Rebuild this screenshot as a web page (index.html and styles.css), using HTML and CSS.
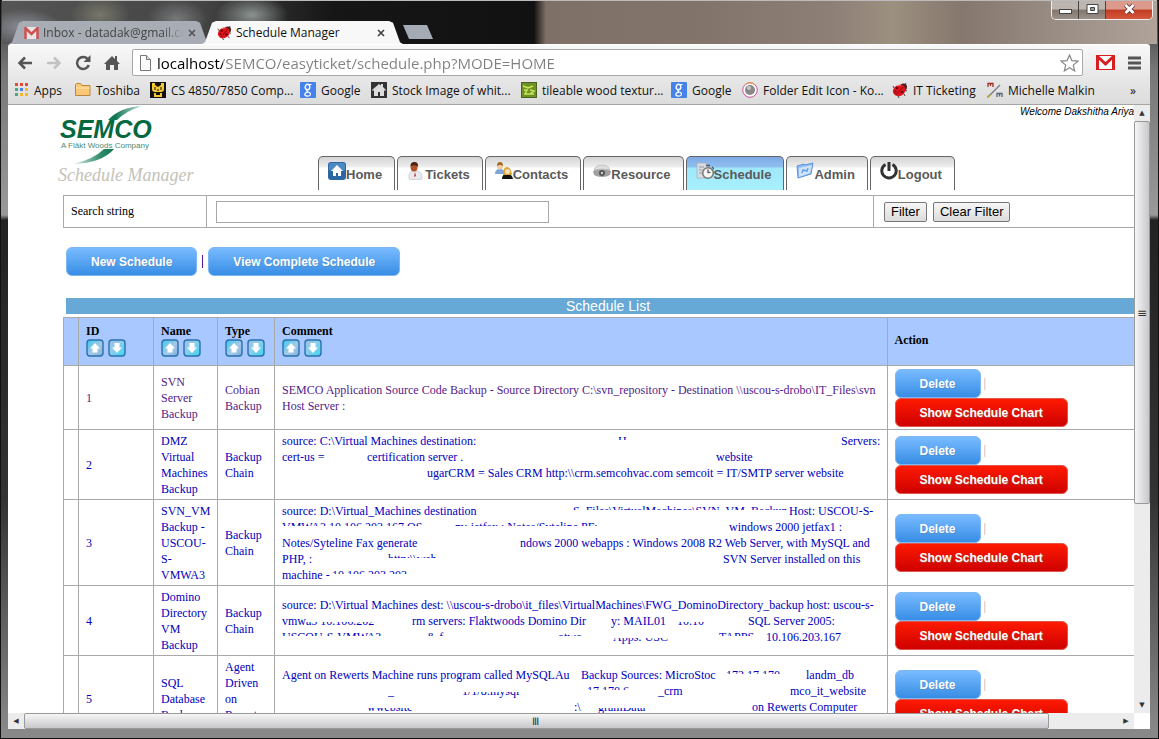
FILE: index.html
```html
<!DOCTYPE html>
<html lang="en">
<head>
    <meta charset="UTF-8">
    <meta name="viewport" content="width=device-width, initial-scale=1.0">
    <title>Schedule Manager</title>
    <link rel="stylesheet" href="styles.css">
</head>
<body>

    <!-- Shared icons -->
    <svg class="defs" width="0" height="0">
        <defs>
            <linearGradient id="cyan" x1="0" y1="0" x2="1" y2="1">
                <stop offset="0" stop-color="#38c8f0"/><stop offset=".55" stop-color="#a5c8e4"/><stop offset="1" stop-color="#7fb2dc"/>
            </linearGradient>
            <linearGradient id="cyan2" x1="1" y1="1" x2="0" y2="0">
                <stop offset="0" stop-color="#38d8f0"/><stop offset=".55" stop-color="#8ccdec"/><stop offset="1" stop-color="#9fc0e0"/>
            </linearGradient>
            <linearGradient id="swoosh" x1="0" y1="0" x2="1" y2="0">
                <stop offset="0" stop-color="#e6f2ec"/><stop offset=".4" stop-color="#2f8c69"/><stop offset=".6" stop-color="#0b7550"/><stop offset="1" stop-color="#c5e0d4"/>
            </linearGradient>
        </defs>
        <symbol id="up" viewBox="0 0 18 18">
            <rect x="1" y="1" width="16" height="16" rx="3" fill="url(#cyan)" stroke="#2a70b0" stroke-width="1.4"/>
            <path d="M9 4 14 9.500H11.500V13.500H6.500V9.500H4z" fill="#fff"/>
        </symbol>
        <symbol id="down" viewBox="0 0 18 18">
            <rect x="1" y="1" width="16" height="16" rx="3" fill="url(#cyan2)" stroke="#2a70b0" stroke-width="1.4"/>
            <path d="M9 14 14 8.500H11.500V4H6.500V8.500H4z" fill="#fff"/>
        </symbol>
        <symbol id="bug" viewBox="0 0 16 16">
            <path d="M2 6 1 4M12 4l2-3M13 8l2 1M12 12l1 2M6 14l1 2" stroke="#444"/>
            <circle cx="11.500" cy="5" r="3.500" fill="#4b2220"/>
            <ellipse cx="7" cy="8.500" rx="6.500" ry="5.500" transform="rotate(-30 7 8)" fill="#e0141c"/>
            <path d="M4 13 11 5" stroke="#8c0a10"/>
            <circle cx="5" cy="6" r="1.300" fill="#6a0508"/><circle cx="10" cy="10" r="1.300" fill="#6a0508"/><circle cx="3.500" cy="9.500" r="1" fill="#6a0508"/>
            <path d="M5 4q2-1.500 4-1" stroke="#ff9c98" fill="none"/>
        </symbol>
        <symbol id="google" viewBox="0 0 16 16">
            <rect width="16" height="16" rx="1" fill="#4583ea"/>
            <ellipse cx="7.500" cy="5" rx="2.300" ry="2.700" fill="none" stroke="#fff" stroke-width="1.400"/>
            <path d="M9 2.500h2.500M8 7.500q-3 1 0 2.200 3 1 2.400 3-1 1.700-3.200 1.500-2.600-.4-2.400-2.200.5-1.500 3.200-1.800" fill="none" stroke="#fff" stroke-width="1.200"/>
        </symbol>
    </svg>

    <!-- Title bar -->
    <header class="titlebar">
        <div class="tabs">
            <div class="tab">
                <svg width="15" height="12" viewBox="0 0 15 12"><rect x="1" width="13" height="12" fill="#e8e4e4"/><path d="M1.500 12V1L7.500 7l6-6v11" fill="none" stroke="#cf5150" stroke-width="2.500"/></svg>
                <span class="tab-title faded">Inbox - datadak@gmail.cc</span>
                <button class="close" aria-label="Close tab"><svg width="8" height="8"><path d="M1 1l6 6M7 1 1 7" stroke="#555" stroke-width="1.700"/></svg></button>
            </div>
            <div class="tab active">
                <svg width="15" height="15"><use href="#bug"/></svg>
                <span class="tab-title">Schedule Manager</span>
                <button class="close" aria-label="Close tab"><svg width="8" height="8"><path d="M1 1l6 6M7 1 1 7" stroke="#444" stroke-width="1.700"/></svg></button>
            </div>
            <button class="new-tab" aria-label="New tab"></button>
        </div>
        <div class="window-buttons">
            <button aria-label="Minimize"><svg width="13" height="12"><rect x=".5" y="6.500" width="12" height="4" fill="#fff" stroke="#444"/></svg></button>
            <button aria-label="Maximize"><svg width="13" height="12"><path d="M1 1.500h11v9H1z" fill="#fff" stroke="#444"/><path d="M4.500 4.500h4v3h-4z" fill="#999" stroke="#444"/></svg></button>
            <button class="quit" aria-label="Close"><svg width="13" height="12"><path d="M2.500 2 10.500 10M10.500 2 2.500 10" stroke="#5c3030" stroke-width="4.500"/><path d="M2.500 2 10.500 10M10.500 2 2.500 10" stroke="#fff" stroke-width="2.800"/></svg></button>
        </div>
    </header>

    <!-- Address bar -->
    <div class="toolbar">
        <button aria-label="Back"><svg width="16" height="14"><path d="M15 7H3M8 1.500 2.500 7 8 12.500" fill="none" stroke="#555" stroke-width="2.500"/></svg></button>
        <button aria-label="Forward"><svg width="16" height="14"><path d="M1 7h12M8 1.500 13.500 7 8 12.500" fill="none" stroke="#c2c2c2" stroke-width="2.500"/></svg></button>
        <button aria-label="Reload"><svg width="16" height="16"><path d="M13 4.500A6 6 0 1 0 13.800 10" fill="none" stroke="#555" stroke-width="2.500"/><path d="M15.500 0v7H8.500z" fill="#555"/></svg></button>
        <button aria-label="Home"><svg width="16" height="16"><path d="M8 1 0 9h2v6h4v-5h4v5h4V9h2l-3-3V1h-2v3z" fill="#555"/></svg></button>
        <div class="omnibox">
            <svg width="13" height="16"><path d="M1.500.5h6l4 4v11h-10z" fill="#fafafa" stroke="#777"/><path d="M7.500.5v4h4" fill="#ddd" stroke="#777"/></svg>
            <input type="text" aria-label="Address" value="localhost/SEMCO/easyticket/schedule.php?MODE=HOME">
            <svg width="19" height="18" viewBox="0 0 19 18"><path d="M9.500 1l2.400 5.600 6 .5-4.600 4 1.400 5.900-5.200-3.200L4.300 17l1.400-5.900-4.600-4 6-.5z" fill="#fff" stroke="#888" stroke-width="1.200"/></svg>
        </div>
        <button aria-label="Gmail"><svg width="19" height="15"><rect width="19" height="15" fill="#fff"/><path d="M1.500 15V1.500L9.500 9l8-7.500V15" fill="none" stroke="#d61f22" stroke-width="3"/><path d="M0 .5h19M0 14.500h19" stroke="#d61f22"/></svg></button>
        <button aria-label="Menu"><svg width="13" height="14"><path d="M0 2h13M0 7h13M0 12h13" stroke="#555" stroke-width="3"/></svg></button>
    </div>

    <!-- Bookmarks -->
    <nav class="bookmarks">
        <a href="#"><svg width="14" height="14"><g fill="#dd4b39"><path d="M0 0h3v3H0zM5 0h3v3H5zM10 0h3v3h-3z"/></g><path d="M0 5h3v3H0z" fill="#4a8"/><path d="M5 5h3v3H5z" fill="#4583ea"/><path d="M10 5h3v3h-3zM5 10h3v3H5zM10 10h3v3h-3z" fill="#f2b630"/><path d="M0 10h3v3H0z" fill="#4a8"/></svg>Apps</a>
        <a href="#"><svg width="16" height="14"><path d="M.5 12.500v-11l1-1h4l1.500 2h8v10z" fill="#f9c877" stroke="#b8863c"/><path d="M1 5h14" stroke="#ffe6b5"/></svg>Toshiba</a>
        <a href="#"><svg width="16" height="16"><rect width="16" height="16" fill="#111"/><path d="M2 1v6q0 3 3 3h6q3 0 3-3V1h-3v2L8 5 5 3V1zM4 11v4h8v-4h-2v2H6v-2z" fill="#f5c836"/><path d="M5 5v3M11 5v3M8 7v2" stroke="#111"/></svg>CS 4850/7850 Comp...</a>
        <a href="#"><svg width="16" height="16"><use href="#google"/></svg>Google</a>
        <a href="#"><svg width="16" height="16"><rect width="16" height="16" fill="#333"/><path d="M8 2 1 8l1 1 1-1v6h4v-4h2v4h4V8l1 1 1-1-3-3V2h-2v1.500z" fill="#ddd"/></svg>Stock Image of whit...</a>
        <a href="#"><svg width="16" height="16"><rect x=".5" y=".5" width="15" height="15" fill="#6f8f28" stroke="#4a6420"/><path d="M2 4l5 2 5-2M3 8h3l-2 4h4M9 8l4 1-4 3h4" stroke="#c8e858" fill="none" stroke-width="1.500"/></svg>tileable wood textur...</a>
        <a href="#"><svg width="16" height="16"><use href="#google"/></svg>Google</a>
        <a href="#"><svg width="16" height="16"><circle cx="8" cy="8" r="7.300" fill="#fff" stroke="#c7519b"/><path d="M3 3a7 7 0 0 1 10 0" fill="none" stroke="#e0a030"/><circle cx="8" cy="8" r="5" fill="#888"/><circle cx="7" cy="6" r="2" fill="#c8c8c8"/></svg>Folder Edit Icon - Ko...</a>
        <a href="#"><svg width="16" height="16"><use href="#bug"/></svg>IT Ticketing</a>
        <a href="#"><svg width="16" height="16"><path d="M1 5V1.500h5V5M3.500 1.500V4" fill="none" stroke="#9b2f25" stroke-width="1.300"/><path d="M2 14 13 3" stroke="#778" stroke-width="1.300"/><path d="M0 15.500 3 13" stroke="#b8a820" stroke-width="2"/><path d="M10 15v-3.500h5V15M12.500 12v2.500" fill="none" stroke="#56657a" stroke-width="1.300"/></svg>Michelle Malkin</a>
        <a class="more" href="#">»</a>
    </nav>

    <!-- Page area with its scrollbars -->
    <div class="view">
        <main class="page">
            <div class="page-head">
                <div class="brand">
                    <svg width="98" height="60" viewBox="0 0 98 60">
                        <path d="M48 15Q60 2 82 1 66 6 57 15zM54 44Q42 58 13 59 34 54 44 44z" fill="url(#swoosh)"/>
                        <text x="0" y="33" class="logo-name">SEMCO</text>
                        <text x="1" y="43" class="logo-sub">A Fläkt Woods Company</text>
                    </svg>
                    <h1>Schedule Manager</h1>
                </div>
                <div class="head-right">
                    <p class="welcome">Welcome Dakshitha Ariya</p>
                    <nav class="menu">
                        <a href="#"><svg width="18" height="18"><rect width="18" height="18" rx="3" fill="#2c67a4"/><rect x="1" y="1" width="16" height="8" rx="2" fill="#4c89c2"/><path d="M9 3 3 9h2v5h3v-3h2v3h3V9h2z" fill="#fff"/></svg>Home</a>
                        <a href="#"><svg width="18" height="18"><path d="M2 17q-1-7 4-8h4q6 1 5 8-6 2-13 0z" fill="#e8eaee" stroke="#b9bcc4" stroke-width=".6"/><path d="M8 10l-1 5 2-1z" fill="#b33"/><ellipse cx="7" cy="5" rx="3.500" ry="4.500" fill="#b0532c"/><path d="M3.500 4q0-4 4-4 4 0 3.500 5-1-3-7.500-1z" fill="#4a2314"/></svg>Tickets</a>
                        <a href="#"><svg width="18" height="18"><path d="M0 12q0-5 5-5t5 5z" fill="#7fa6d8"/><circle cx="5" cy="4.500" r="3" fill="#f2cda0"/><path d="M2 4q0-4 3-4t3 4q-3-2-6 0z" fill="#a06a20"/><path d="M7 17q0-5 5-5t6 5z" fill="#111"/><path d="M8 13q0-8 4-8t5 8z" fill="#dba332"/><circle cx="12.500" cy="9.500" r="2.500" fill="#f8dcb8"/></svg>Contacts</a>
                        <a href="#"><svg width="18" height="18"><path d="M1 8q2-5 8-5t8 5v4q-8 4-16 0z" fill="#b8b8b8"/><path d="M1 8q2-5 8-5t8 5q-8-2-16 0z" fill="#dedede" stroke="#b5b5b5" stroke-width=".6"/><path d="M0 9q9-2 18 0l-1 4q-3 2-8 2t-8-2z" fill="#a0a0a0"/><circle cx="9" cy="11" r="3" fill="#555"/><circle cx="9" cy="11" r="1.200" fill="#ccc"/></svg>Resource</a>
                        <a href="#" class="current"><svg width="18" height="18"><path d="M1 1h8l3 3v12H1z" fill="#d8dbe0" stroke="#a9adb5" stroke-width=".7"/><path d="M3 5h5M3 8h3M3 11h3" stroke="#99a"/><circle cx="12" cy="11" r="5.300" fill="#f4f4f4" stroke="#777" stroke-width="1.500"/><path d="M12 11V7.500M12 11l2.500-1M10 3.500h4M16 5l2 2" stroke="#555" stroke-width="1.300"/></svg>Schedule</a>
                        <a href="#"><svg width="18" height="18"><path d="M1 4 8 2l1 1 8-2-2 11L2 16z" fill="#8fbdf2" stroke="#5c92d8"/><path d="M3 6 16 3l-2 8-11 4z" fill="#cfe3fb"/><path d="M6 11l1-3 4 1 1-3" fill="none" stroke="#6aa0e4" stroke-width="1.500"/></svg>Admin</a>
                        <a href="#"><svg width="18" height="18"><path d="M5.500 2.500a7.200 7.200 0 1 0 7 0M9 0v9" fill="none" stroke="#333" stroke-width="3"/></svg>Logout</a>
                    </nav>
                </div>
            </div>

            <form class="search">
                <div class="search-label"><label for="search">Search string</label></div>
                <div class="search-field"><input type="text" id="search"></div>
                <div class="search-actions"><button type="button">Filter</button><button type="button">Clear Filter</button></div>
            </form>

            <div class="actions">
                <button class="btn">New Schedule</button><span class="bar"></span><button class="btn">View Complete Schedule</button>
            </div>

            <h2>Schedule List</h2>
            <table>
                <colgroup><col class="c-mark"><col class="c-id"><col class="c-name"><col class="c-type"><col><col class="c-action"></colgroup>
                <thead>
                    <tr>
                        <th></th>
                        <th>ID<div class="sort"><svg><use href="#up"/></svg><svg><use href="#down"/></svg></div></th>
                        <th>Name<div class="sort"><svg><use href="#up"/></svg><svg><use href="#down"/></svg></div></th>
                        <th>Type<div class="sort"><svg><use href="#up"/></svg><svg><use href="#down"/></svg></div></th>
                        <th>Comment<div class="sort"><svg><use href="#up"/></svg><svg><use href="#down"/></svg></div></th>
                        <th>Action</th>
                    </tr>
                </thead>
                <tbody>
                    <tr class="visited">
                        <td></td>
                        <td><a href="#">1</a></td>
                        <td><a href="#">SVN<br>Server<br>Backup</a></td>
                        <td><a href="#">Cobian<br>Backup</a></td>
                        <td><a href="#">SEMCO Application Source Code Backup - Source Directory C:\svn_repository - Destination \\uscou-s-drobo\IT_Files\svn<br>Host Server :</a></td>
                        <td><button class="btn">Delete</button><span class="dim">|</span><br><button class="btn red">Show Schedule Chart</button></td>
                    </tr>
                    <tr>
                        <td></td>
                        <td><a href="#">2</a></td>
                        <td><a href="#">DMZ<br>Virtual<br>Machines<br>Backup</a></td>
                        <td><a href="#">Backup<br>Chain</a></td>
                        <td><a href="#">
                            <span class="line"><i class="w336">source: C:\Virtual Machines destination:</i><i class="w223 top">H</i><i>Servers:</i></span>
                            <span class="line"><i class="w85">cert-us =</i><i class="w349">certification server .</i><i>website</i></span>
                            <span class="line"><i class="w145"></i><i>ugarCRM = Sales CRM http:\\crm.semcohvac.com semcoit = IT/SMTP server website</i></span>
                            <span class="line"></span>
                        </a></td>
                        <td><button class="btn">Delete</button><span class="dim">|</span><br><button class="btn red">Show Schedule Chart</button></td>
                    </tr>
                    <tr>
                        <td></td>
                        <td><a href="#">3</a></td>
                        <td><a href="#">SVN_VM<br>Backup -<br>USCOU-<br>S-<br>VMWA3</a></td>
                        <td><a href="#">Backup<br>Chain</a></td>
                        <td><a href="#">
                            <span class="line"><i class="w291">source: D:\Virtual_Machines destination</i><i class="w216 top">S_Files\VirtualMachines\SVN_VM_Backup</i><i>Host: USCOU-S-</i></span>
                            <span class="line"><i class="w173 top">VMWA3 10.106.203.167 OS</i><i class="w274 top">m: jetfax : Notes/Syteline PF:</i><i>windows 2000 jetfax1 :</i></span>
                            <span class="line"><i class="w238">Notes/Syteline Fax generate</i><i>ndows 2000 webapps : Windows 2008 R2 Web Server, with MySQL and</i></span>
                            <span class="line"><i class="w106">PHP, :</i><i class="w335 top">http:\\web</i><i>SVN Server installed on this</i></span>
                            <span class="line"><i class="w50">machine -</i><i class="top">10.106.203.203</i></span>
                        </a></td>
                        <td><button class="btn">Delete</button><span class="dim">|</span><br><button class="btn red">Show Schedule Chart</button></td>
                    </tr>
                    <tr>
                        <td></td>
                        <td><a href="#">4</a></td>
                        <td><a href="#">Domino<br>Directory<br>VM<br>Backup</a></td>
                        <td><a href="#">Backup<br>Chain</a></td>
                        <td><a href="#">
                            <span class="line">source: D:\Virtual Machines dest: \\uscou-s-drobo\it_files\VirtualMachines\FWG_DominoDirectory_backup host: uscou-s-</span>
                            <span class="line"><i class="w24">vmw</i><i class="w106 low">a3 10.106.202</i><i class="w199">rm servers: Flaktwoods Domino Dir</i><i class="w66">y: MAIL01</i><i class="w71 low">10.10</i><i>SQL Server 2005:</i></span>
                            <span class="line"><i class="w145 top">USCOU-S-VMWA3</i><i class="w131 top">&amp; f</i><i class="w55 top">otwo</i><i class="w106 low">Apps: USC</i><i class="w47 top">TAPPS</i><i>10.106.203.167</i></span>
                        </a></td>
                        <td><button class="btn">Delete</button><span class="dim">|</span><br><button class="btn red">Show Schedule Chart</button></td>
                    </tr>
                    <tr>
                        <td></td>
                        <td><a href="#">5</a></td>
                        <td><a href="#">SQL<br>Database<br>Backup</a></td>
                        <td><a href="#">Agent<br>Driven<br>on<br>Remote<br>Machine</a></td>
                        <td><a href="#">
                            <span class="line"><i class="w299">Agent on Rewerts Machine runs program called MySQLAu</i><i class="w145">Backup Sources: MicroStoc</i><i class="w80 top">172.17.170</i><i>landm_db</i></span>
                            <span class="line"><i class="w106"></i><i class="w74 low">_</i><i class="w125 low">1/1/8:mysql</i><i class="w71 top">17.170.6</i><i class="w132">_crm</i><i>mco_it_website</i></span>
                            <span class="line"><i class="w85"></i><i class="w207 low">wwebsite</i><i class="w24">:\</i><i class="w154 low">gramData</i><i>on Rewerts Computer</i></span>
                            <span class="line"></span>
                        </a></td>
                        <td><button class="btn">Delete</button><span class="dim">|</span><br><button class="btn red">Show Schedule Chart</button></td>
                    </tr>
                </tbody>
            </table>
        </main>
        <div class="vscroll"><span class="arrow">▲</span><span class="thumb">≡</span><span class="arrow">▼</span></div>
        <div class="hscroll"><span class="arrow">◀</span><span class="thumb"><b>≡</b></span><span class="arrow">▶</span></div>
    </div>

</body>
</html>
```
FILE: styles.css
```css
* {
    box-sizing: border-box;
}

body {
    margin: 0;
    height: 100vh;
    padding: 0 9px 10px 8px;
    display: flex;
    flex-direction: column;
    overflow: hidden;
    background: linear-gradient(#333 0, #777 70px, #999 215px, #222 220px, #333 500px, #888 730px);
    box-shadow: inset 0 0 0 1px #111;
    font-family: "Liberation Serif", serif;
    font-size: 12px;
}

button {
    padding: 0;
    border: 0;
    background: none;
    font-family: inherit;
}

a {
    text-decoration: none;
}

.defs {
    position: absolute;
}

/* Title bar */
.titlebar {
    flex: none;
    height: 44px;
    margin: 0 -7px 0 -6px;
    padding: 0 4px 0 7px;
    display: flex;
    justify-content: space-between;
    align-items: flex-end;
    border-top: 1px solid #bbb;
    background:
        radial-gradient(ellipse 40px 18px at 20px 26px, #8a8c96, transparent),
        radial-gradient(ellipse 30px 20px at 98px 14px, #77766a, transparent),
        radial-gradient(ellipse 30px 20px at 175px 18px, #77787a, transparent),
        radial-gradient(ellipse 36px 20px at 250px 14px, #8a9290, transparent),
        linear-gradient(90deg, #555 0, #444 200px, #161616 330px, #111 532px, #7e7067 544px, #82746a 700px, #8d7f76 830px, #9c907f 890px, #85776d 960px, #b0a49a 100%);
    font-family: "Open Sans", sans-serif;
}

.tabs {
    display: flex;
    height: 23px;
}

.tab {
    width: 201px;
    margin-right: -8px;
    padding: 0 14px 0 15px;
    display: flex;
    align-items: center;
    gap: 4px;
    background: #a8adb5;
    color: #444;
    clip-path: polygon(0 100%, 3px 92%, 10px 8%, 14px 0, 187px 0, 191px 8%, 198px 92%, 100% 100%);
}

.tab.active {
    position: relative;
    background: #f8f8f8;
    color: #111;
}

.tab:not(.active) {
    padding-right: 10px;
}

.tab-title {
    flex: 1;
    min-width: 0;
    white-space: nowrap;
}

.faded {
    mask-image: linear-gradient(90deg, #000 85%, transparent);
}

.close {
    display: flex;
    margin-right: 4px;
}

.new-tab {
    width: 30px;
    height: 14px;
    margin: 4px 0 0 8px;
    background: #a5abb4;
    clip-path: polygon(0 0, 80% 0, 100% 100%, 20% 100%);
}

.window-buttons {
    align-self: flex-start;
    display: flex;
    border: 1px solid #eee;
    border-top: 0;
    border-radius: 0 0 5px 5px;
    overflow: hidden;
}

.window-buttons button {
    width: 27px;
    height: 18px;
    border-right: 1px solid #444;
    background: linear-gradient(#bdb5b0 45%, #82776f 50%, #9b9189);
}

.window-buttons .quit {
    width: 46px;
    border: 0;
    background: linear-gradient(#dc9a8c 45%, #c23c24 50%, #d4583c);
}

/* Address bar */
.toolbar {
    flex: none;
    height: 32px;
    padding: 4px 9px 0;
    display: flex;
    align-items: center;
    gap: 13px;
    background: linear-gradient(#f8f8f8, #e9e9e9);
    border-top: 1px solid #fff;
    border-radius: 3px 3px 0 0;
}

.toolbar button {
    display: flex;
}

.omnibox {
    flex: 1;
    height: 27px;
    padding: 0 3px 0 6px;
    margin-left: -1px;
    display: flex;
    align-items: center;
    gap: 5px;
    background: #fff;
    border: 1px solid #a8a8a8;
    border-radius: 2px;
}

.omnibox input {
    flex: 1;
    min-width: 0;
    padding: 0;
    border: 0;
    color: transparent;
    background: linear-gradient(90deg, #000 66px, #808080 66px);
    background-clip: text;
    font: 15px/22px "Open Sans", sans-serif;
}

/* Bookmarks */
.bookmarks {
    flex: none;
    height: 29px;
    padding: 0 7px;
    display: grid;
    grid-template-columns: 60px 75px 150px 71px 150px 150px 71px 150px 95px 1fr 13px;
    align-items: center;
    background: linear-gradient(#e8e8e8, #dcdcdc);
    border-bottom: 1px solid #a5a5a5;
    font-family: "Open Sans", sans-serif;
}

.bookmarks a {
    display: flex;
    align-items: center;
    gap: 5px;
    white-space: nowrap;
    color: #111;
}

/* Page area */
.view {
    flex: 1;
    min-height: 0;
    display: grid;
    grid-template: minmax(0, 1fr) 16px / minmax(0, 1fr) 16px;
    background: #fff;
}

.page {
    overflow: hidden;
    padding-left: 55px;
    color: #000;
}

.page-head {
    height: 85px;
    display: flex;
}

.brand {
    width: 254px;
    margin-left: -5px;
}

.brand svg {
    display: block;
    margin-left: 2px;
}

.logo-name {
    font: italic bold 25px "Liberation Sans", sans-serif;
    fill: #05683f;
}

.logo-sub {
    font: 8px "Liberation Sans", sans-serif;
    fill: #4f8a72;
}

h1 {
    margin: 0;
    font: italic 18px/21px "Liberation Serif", serif;
    color: #c4c2b8;
}

.head-right {
    flex: 1;
    display: flex;
    flex-direction: column;
    justify-content: space-between;
    padding-left: 6px;
}

.welcome {
    margin: 0;
    text-align: right;
    font: italic 10px/14px "Liberation Sans", sans-serif;
}

.menu {
    display: flex;
    gap: 2px;
}

.menu a {
    height: 34px;
    padding: 5px 12px 0 9px;
    display: flex;
    border: 1px solid #666;
    border-bottom: 0;
    border-radius: 5px 5px 0 0;
    background: linear-gradient(#d4d4d4, #eee 10px, #fff 11px);
    color: #5a5a5a;
    font: bold 13px/26px "Liberation Sans", sans-serif;
}

.menu .current {
    background: linear-gradient(#7fa8e4, #8fc0f0 10px, #9fe8fa 11px, #a8f0fd);
}

/* Search */
.search {
    margin-top: 5px;
    height: 33px;
    display: flex;
    border: 1px solid #a9a9a9;
    border-right: 0;
}

.search div {
    display: flex;
    align-items: center;
}

.search-label {
    width: 142px;
    padding-left: 7px;
}

.search-field {
    flex: 1;
    padding-left: 9px;
    border: solid #a9a9a9;
    border-width: 0 1px;
}

.search-field input {
    width: 333px;
    height: 22px;
    border: 1px solid #a9a9a9;
}

.search-actions {
    width: 260px;
    padding-left: 10px;
    gap: 6px;
}

.search-actions button {
    height: 20px;
    padding: 0 6px;
    border: 1px solid #777;
    border-radius: 2px;
    background: linear-gradient(#f6f6f6, #dcdcdc);
    font: 13px "Liberation Sans", sans-serif;
}

/* Buttons */
.btn {
    height: 29px;
    padding: 0 24px;
    border: 1px solid #7db8f4;
    border-radius: 6px;
    background: linear-gradient(#79bbff, #378de5);
    color: #fff;
    font: bold 12px "Liberation Sans", sans-serif;
    text-shadow: 1px 1px 0 #528ecc;
    vertical-align: top;
}

.btn.red {
    border-color: #e0584c;
    background: linear-gradient(#fe1a00, #ce0100);
    text-shadow: 1px 1px 0 #b23e35;
}

.actions {
    margin: 19px 0 22px 3px;
    display: flex;
    align-items: center;
}

.bar {
    width: 1px;
    height: 13px;
    margin: 0 5px;
    background: #551a8b;
}

.dim {
    margin-left: 3px;
    line-height: 29px;
    color: #aaa;
}

/* Schedule table */
h2 {
    margin: 0 0 3px 3px;
    padding-left: 16px;
    background: #66a9d6;
    color: #fff;
    text-align: center;
    font: 14px/16px "Liberation Sans", sans-serif;
}

table {
    width: 100%;
    table-layout: fixed;
    border-collapse: collapse;
    line-height: 16px;
}

.c-mark { width: 15px; }
.c-id { width: 75px; }
.c-name { width: 64px; }
.c-type { width: 57px; }
.c-action { width: 247px; }

th,
td {
    padding: 3px 7px 2px;
    border: 1px solid #a9a9a9;
    text-align: left;
    white-space: nowrap;
}

th:last-child,
td:last-child {
    border-right: 0;
}

th {
    padding-top: 5px;
    padding-bottom: 8px;
    background: #a8c8ff;
}

.sort {
    display: flex;
    gap: 4px;
}

.sort svg {
    width: 18px;
    height: 18px;
}

td:last-child {
    line-height: 0;
}

td a {
    color: #0000bb;
}

.visited a {
    color: #551a8b;
}

/* Comment lines with removed passages */
.line {
    display: flex;
    height: 16px;
}

.line i {
    flex: none;
    font-style: normal;
}

.top { clip-path: inset(0 0 9px 0); }
.low { clip-path: inset(9px 0 0 0); }

.w24 { width: 24px; }
.w47 { width: 47px; }
.w50 { width: 50px; }
.w55 { width: 55px; }
.w66 { width: 66px; }
.w71 { width: 71px; }
.w74 { width: 74px; }
.w80 { width: 80px; }
.w85 { width: 85px; }
.w106 { width: 106px; }
.w125 { width: 125px; }
.w131 { width: 131px; }
.w132 { width: 132px; }
.w145 { width: 145px; }
.w154 { width: 154px; }
.w173 { width: 173px; }
.w199 { width: 199px; }
.w207 { width: 207px; }
.w216 { width: 216px; }
.w223 { width: 223px; }
.w238 { width: 238px; }
.w274 { width: 274px; }
.w291 { width: 291px; }
.w299 { width: 299px; }
.w335 { width: 335px; }
.w336 { width: 336px; }
.w349 { width: 349px; }

/* Scrollbars */
.vscroll,
.hscroll {
    display: flex;
    background: #ececec;
    font: 7px "DejaVu Sans", sans-serif;
    color: #333;
}

.vscroll {
    flex-direction: column;
}

.vscroll .arrow,
.hscroll .arrow {
    flex: none;
    width: 16px;
    height: 16px;
    display: flex;
    align-items: center;
    justify-content: center;
}

.thumb {
    display: flex;
    align-items: center;
    justify-content: center;
    border: 1px solid #999;
    border-radius: 2px;
    font-size: 12px;
}

.vscroll .thumb {
    height: 63%;
    margin-bottom: auto;
    background: linear-gradient(90deg, #f6f6f6, #c8c8cc);
}

.hscroll .thumb {
    width: 91%;
    margin-right: auto;
    background: linear-gradient(#f6f6f6, #c8c8cc);
}

.hscroll b {
    font-weight: normal;
    transform: rotate(90deg);
}
```
